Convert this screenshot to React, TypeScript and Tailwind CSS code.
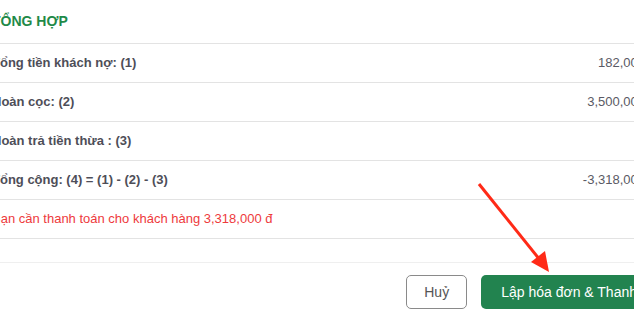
import React from "react";

const rows = [
  { label: "Tổng tiền khách nợ: (1)", value: "182,000" },
  { label: "Hoàn cọc: (2)", value: "3,500,000" },
  { label: "Hoàn trả tiền thừa : (3)", value: "" },
  { label: "Tổng cộng: (4) = (1) - (2) - (3)", value: "-3,318,000" },
];

const App = () => {
  return (
    <div className="relative w-[634px] h-[316px] overflow-hidden bg-white font-['Liberation_Sans',Arial,sans-serif]">
      <div className="ml-[-8px] w-[679px]">
        {/* header */}
        <div className="h-[43px] flex items-center text-[14px] font-bold text-[#1f8a48]">
          TỔNG HỢP
        </div>
        {rows.map((r) => (
          <div
            key={r.label}
            className="h-[39px] border-t border-[#e3e3e3] flex items-center justify-between pr-[26px] text-[13px]"
          >
            <span className="font-bold text-[#4e4e58]">{r.label}</span>
            <span className="text-[#5a5a64]">{r.value}</span>
          </div>
        ))}
        <div className="h-[39px] border-t border-[#e3e3e3] flex items-center text-[13px] text-[#ee3a3c]">
          Bạn cần thanh toán cho khách hàng 3,318,000 đ
        </div>
        <div className="h-[24px] border-t border-[#e3e3e3]" />
        {/* footer */}
        <div className="border-t border-[#efefef] pt-[12px] flex justify-end gap-[14px]">
          <button className="h-[34px] w-[61px] rounded-[5px] border border-[#8a8a8a] bg-white text-[14px] text-[#555]">
            Huỷ
          </button>
          <button className="h-[34px] px-5 rounded-[5px] bg-[#22834f] text-[14px] text-white whitespace-nowrap">
            Lập hóa đơn &amp; Thanh lý
          </button>
        </div>
      </div>

      {/* annotation arrow */}
      <svg
        className="absolute left-0 top-0 pointer-events-none"
        width="634"
        height="316"
        viewBox="0 0 634 316"
      >
        <line
          x1="479"
          y1="184"
          x2="540"
          y2="260"
          stroke="#ff2a17"
          strokeWidth="3"
        />
        <polygon points="549,272 531,262 545,251" fill="#ff2a17" />
      </svg>
    </div>
  );
};

export default App;
